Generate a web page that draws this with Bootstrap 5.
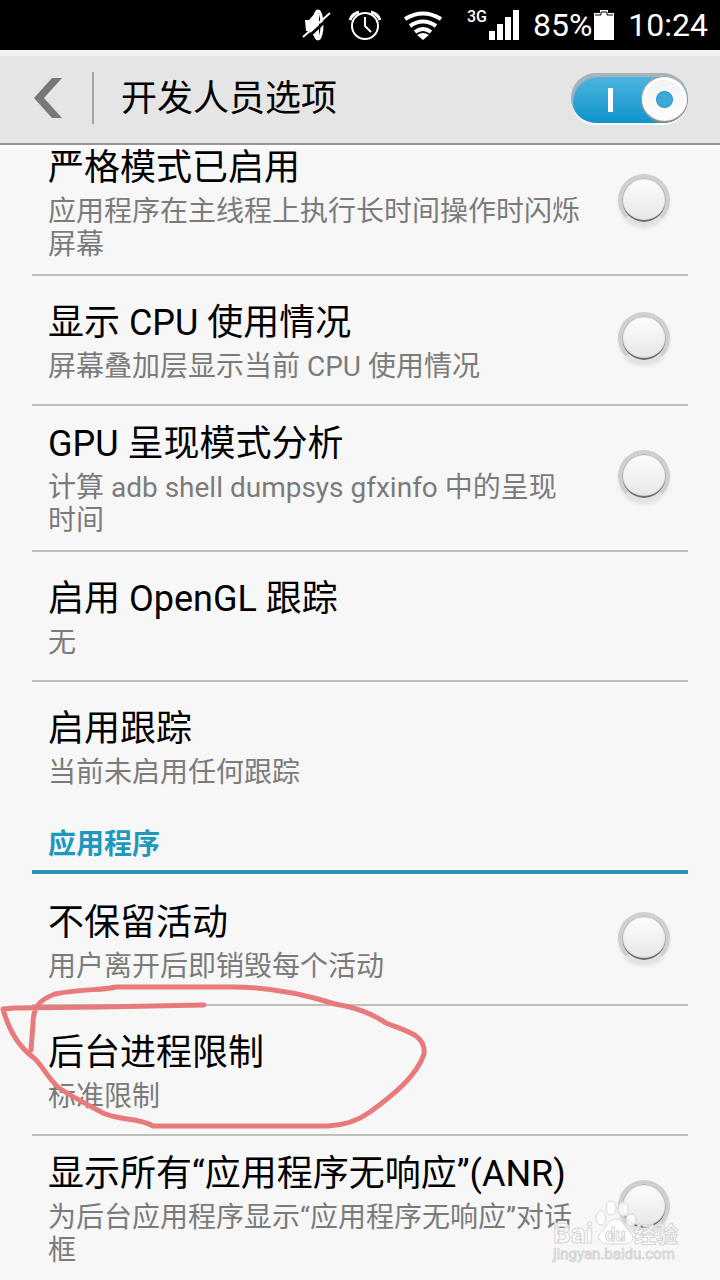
<!DOCTYPE html>
<html lang="zh-CN">
<head>
<meta charset="utf-8">
<meta name="viewport" content="width=device-width, initial-scale=1">
<title>开发人员选项</title>
<link href="https://cdn.jsdelivr.net/npm/bootstrap@5.3.0/dist/css/bootstrap.min.css" rel="stylesheet">
<style>
  body { background: #f7f7f7; color: #000; font-family: Roboto, "Noto Sans CJK SC", sans-serif; }
  .screen { overflow: hidden; height: 100vh; }
  .status { background: #000; color: #fff; height: 50px; font-size: 32px; line-height: 50px; padding-right: 12px; }
  .status svg { display: block; }
  .net { font-size: 16px; line-height: 16px; padding-top: 9px; font-weight: 500; }
  .clock { margin-left: 12px; }
  .topbar { background: #e5e5e5; height: 95px; border-top: 6px solid #f2f2f2; border-bottom: 2px solid #979797; z-index: 2; padding: 0 32px 3px; box-shadow: 0 4px 0 #fdfdfd; }
  .topbar h1 { font-size: 36px; line-height: 48px; padding-top: 2px; }
  .rule { width: 2px; height: 52px; background: #a5a5a5; margin: 0 27px 0 30px; }
  .power { appearance: none; display: flex; justify-content: flex-end; align-items: flex-end; width: 117px; height: 50px; margin: 0; border-radius: 25px; cursor: pointer;
    background: linear-gradient(#fff, #fff) 37px 15px / 5px 24px no-repeat, linear-gradient(#52b6e0, #0e95cc);
    box-shadow: inset 2px 4px 1px #a9b2b6, 0 2px 0 #fff; }
  .power::before { content: ""; width: 47px; height: 47px; border-radius: 50%;
    background: radial-gradient(circle, #3ba9d6 0 7px, #2f9dcc 8px, transparent 9px), linear-gradient(#f2f2f2, #fff);
    box-shadow: inset 0 -2px 1px #888, inset 0 0 0 1px #999, inset 0 0 0 4px #fff; }
  .options { padding: 0 32px; margin-top: -15px; }
  .option { min-height: 130px; border-bottom: 2px solid #bfbfbf; padding-left: 16px; padding-right: 18px; gap: 36px; }
  .option.no-line { border-bottom-color: transparent; }
  .copy { padding: 17px 0 13px; }
  .name { font-size: 36px; line-height: 42px; margin-bottom: 6px; }
  .note { font-size: 28px; line-height: 33px; color: #7b7b7b; }
  .tick { appearance: none; width: 52px; height: 52px; margin: 0; border-radius: 50%; border: 4px solid #cfcfcf; border-bottom-color: #e2e2e2;
    background: linear-gradient(#fdfdfd, #e6e6e6) padding-box; box-shadow: inset 0 -3px 1px -1px #666, inset 0 0 1px 1px #aaa, 0 3px 4px -1px #ddd; }
  .group-title { font-size: 28px; line-height: 58px; height: 62px; margin: 0 0 2px; padding: 4px 16px 0; font-weight: 700; color: #1f98bd; border-bottom: 4px solid #2b91b3; }
  .scribble { left: -32px; top: -22px; z-index: 1; pointer-events: none; }
  .watermark { right: 38px; bottom: 14px; z-index: 3; pointer-events: none; }
</style>
</head>
<body>
<div class="screen d-flex flex-column position-relative">
  <div class="status d-flex justify-content-end flex-shrink-0">
    <svg width="166" height="50" viewBox="0 0 166 50" fill="none" stroke="#fff" aria-hidden="true">
      <path d="M4 20h4l7-8q4 0 3 6v15q1 5-3 5l-7-7H5z" fill="#fff" stroke="none"/>
      <ellipse cx="17" cy="25" rx="4" ry="14" stroke-width="3"/>
      <path d="M4 40 31 15" stroke="#000" stroke-width="3"/><path d="M2 37 29 13" stroke-width="2"/>
      <circle cx="64" cy="26" r="13" stroke-width="2"/><path d="M64 17v9l6 6" stroke-width="2"/>
      <path d="M49 20q2-6 9-8M79 20q-2-6-9-8" stroke-width="3"/>
      <g stroke-width="4"><path d="M104 19q18-11 36 0M109 26q13-9 26 0M114 32q8-6 16 0"/><path d="m116 35 6 5 6-5q-6-4-12 0z" fill="#fff" stroke="none"/></g>
    </svg>
    <span class="net">3G</span>
    <svg width="34" height="50" viewBox="0 0 34 50" fill="#fff" aria-hidden="true"><path d="M2 31h6v9H2zM10 24h6v16h-6zM18 17h6v23h-6zM26 10h6v30h-6z"/></svg>
    <span class="ms-2 ps-1">85%</span>
    <svg width="24" height="50" viewBox="0 0 24 50" aria-hidden="true"><path d="M2 13h6v-3h8v3h6v27H2z" fill="#fff"/><path d="M3 15h6v-3h6v3h6" fill="none" stroke="#000" stroke-width="1"/></svg>
    <span class="clock">10:24</span>
  </div>
  <header class="topbar d-flex align-items-center flex-shrink-0 position-relative">
    <button class="btn p-0 border-0" aria-label="返回"><svg class="d-block" width="30" height="42" viewBox="0 0 30 42"><path d="M30 1H20L2 21l18 20h10L12 21z" fill="#777"/></svg></button>
    <span class="rule"></span>
    <h1 class="fw-normal mb-0 me-auto">开发人员选项</h1>
    <input class="power" type="checkbox" role="switch" checked aria-label="开发人员选项">
  </header>
  <main class="options">
    <div class="option d-flex align-items-center">
      <label class="copy flex-fill" for="o1"><span class="name d-block">严格模式已启用</span><span class="note d-block">应用程序在主线程上执行长时间操作时闪烁屏幕</span></label>
      <input class="tick flex-shrink-0 mb-1" type="checkbox" id="o1">
    </div>
    <div class="option d-flex align-items-center">
      <label class="copy flex-fill" for="o2"><span class="name d-block">显示 CPU 使用情况</span><span class="note d-block">屏幕叠加层显示当前 CPU 使用情况</span></label>
      <input class="tick flex-shrink-0 mb-1" type="checkbox" id="o2">
    </div>
    <div class="option d-flex align-items-center">
      <label class="copy flex-fill" for="o3"><span class="name d-block">GPU 呈现模式分析</span><span class="note d-block">计算 adb shell dumpsys gfxinfo 中的呈现时间</span></label>
      <input class="tick flex-shrink-0 mb-1" type="checkbox" id="o3">
    </div>
    <div class="option d-flex align-items-center">
      <div class="copy"><div class="name">启用 OpenGL 跟踪</div><div class="note">无</div></div>
    </div>
    <div class="option no-line d-flex align-items-center">
      <div class="copy"><div class="name">启用跟踪</div><div class="note">当前未启用任何跟踪</div></div>
    </div>
    <h2 class="group-title">应用程序</h2>
    <div class="option d-flex align-items-center">
      <label class="copy flex-fill" for="o4"><span class="name d-block">不保留活动</span><span class="note d-block">用户离开后即销毁每个活动</span></label>
      <input class="tick flex-shrink-0 mb-1" type="checkbox" id="o4">
    </div>
    <div class="option d-flex align-items-center position-relative">
      <div class="copy"><div class="name">后台进程限制</div><div class="note">标准限制</div></div>
      <svg class="scribble position-absolute" width="430" height="148" viewBox="0 984 430 148" fill="none" stroke="#e87a7c" stroke-width="5" stroke-linecap="round" stroke-linejoin="round" aria-hidden="true">
        <path d="M204 1005 100 1007 15 1008 3 1009Q12 1042 34 1058C43 1066 46 1076 59 1088C76 1099 88 1105 103 1113C120 1121 138 1117 153 1126H328Q352 1125 370 1112C392 1096 417 1076 424 1054C426 1035 408 1032 386 1023C370 1012 354 1007 335 1004C300 993 264 987 233 987H116C100 991 85 988 55 994C38 1000 33 1009 33 1024L31 1050"/>
      </svg>
    </div>
    <div class="option no-line d-flex align-items-center">
      <label class="copy flex-fill" for="o5"><span class="name d-block">显示所有“应用程序无响应”(ANR)</span><span class="note d-block">为后台应用程序显示“应用程序无响应”对话框</span></label>
      <input class="tick flex-shrink-0 mb-1" type="checkbox" id="o5">
    </div>
  </main>
  <svg class="watermark position-absolute" width="130" height="66" viewBox="0 0 130 66" fill="#fff" fill-opacity=".8" stroke="#d6d6d6" stroke-width="1" font-family="Roboto, 'Noto Sans CJK SC', sans-serif" role="img" aria-label="Baidu 经验">
    <ellipse cx="49" cy="18" rx="5" ry="7"/><ellipse cx="59" cy="8" rx="5" ry="7"/><ellipse cx="71" cy="9" rx="5" ry="7"/><ellipse cx="79" cy="20" rx="5" ry="6"/>
    <path d="M64 19c-8 0-9 8-15 13-6 6 0 12 8 12h14c9 0 13-6 7-12-6-5-7-13-14-13z"/>
    <text x="1" y="43" font-size="28" font-weight="700">Bai</text>
    <text x="53" y="41" font-size="18" font-weight="700">du</text>
    <text x="82" y="42" font-size="22" font-weight="700">经验</text>
    <text x="1" y="59" font-size="15" fill-opacity=".5">jingyan.baidu.com</text>
  </svg>
</div>
<script src="https://cdn.jsdelivr.net/npm/bootstrap@5.3.0/dist/js/bootstrap.bundle.min.js"></script>
</body>
</html>
